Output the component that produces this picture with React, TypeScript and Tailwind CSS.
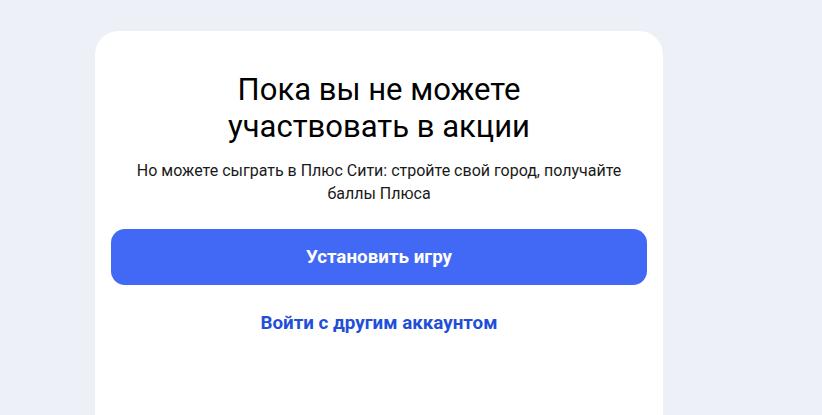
export default function App() {
  return (
    <div className="h-[415px] w-[822px] overflow-hidden bg-[#edf0f7] font-['Roboto',sans-serif]">
      <div className="ml-[95px] mt-[31px] h-[420px] w-[568px] rounded-[24px] bg-white px-4 pt-[40px]">
        <h1 className="text-center text-[31px] font-normal leading-[37px] text-black">
          Пока вы не можете
          <br />
          участвовать в акции
        </h1>
        <p className="mx-auto mt-[14px] w-[492px] text-center text-[16px] leading-[23px] text-[#1a1a1a]">
          Но можете сыграть в Плюс Сити: стройте свой город, получайте баллы Плюса
        </p>
        <button className="mt-[24px] flex h-[56px] w-full items-center justify-center rounded-[14px] bg-[#4269f5] text-[18.8px] font-bold text-white">
          Установить игру
        </button>
        <div className="mt-[24px] text-center text-[18.8px] font-bold text-[#1f4fd8]">
          Войти с другим аккаунтом
        </div>
      </div>
    </div>
  );
}
